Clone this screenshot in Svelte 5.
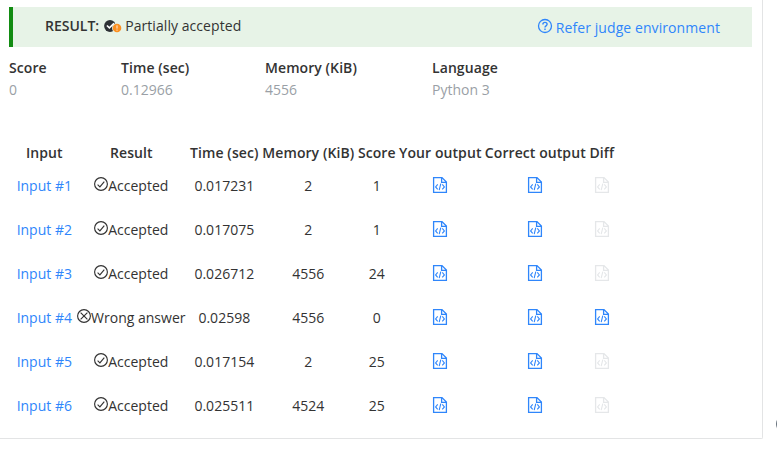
<script>
  const summary = [
    { label: 'Score', value: '0', width: 112 },
    { label: 'Time (sec)', value: '0.12966', width: 144 },
    { label: 'Memory (KiB)', value: '4556', width: 167 },
    { label: 'Language', value: 'Python 3', width: 120 }
  ];
  const headers = ['Input', 'Result', 'Time (sec)', 'Memory (KiB)', 'Score', 'Your output', 'Correct output', 'Diff'];
  const rows = [
    { ok: true, time: '0.017231', memory: 2, score: 1 },
    { ok: true, time: '0.017075', memory: 2, score: 1 },
    { ok: true, time: '0.026712', memory: 4556, score: 24 },
    { ok: false, time: '0.02598', memory: 4556, score: 0 },
    { ok: true, time: '0.017154', memory: 2, score: 25 },
    { ok: true, time: '0.025511', memory: 4524, score: 25 }
  ];
</script>

{#snippet file(active)}
  <svg class="file" class:active width="16" height="18" viewBox="0 0 16 18">
    <path d="M1.6 1.6H10L14.4 6V16.4H1.6Z M9.6 1.6V6.4H14.4" />
    <path class="thin" d="M5.7 8.4L3.6 10.9L5.7 13.4 M10.3 8.4L12.4 10.9L10.3 13.4 M8.8 7.6L7.2 14.2" />
  </svg>
{/snippet}

<div class="page">
  <main class="card">
    <div class="banner">
      <div class="result">
        <b>RESULT:</b>
        <svg class="partial" width="18" height="14" viewBox="0 0 18 14">
          <circle cx="6" cy="6" r="5.9" fill="#2d3135" />
          <path d="M2.9 5.5L5.4 7.9L10 3.4" fill="none" stroke="#fff" stroke-width="1.6" />
          <circle cx="13" cy="8" r="5" fill="#e8f3e8" />
          <circle cx="13" cy="8" r="4.3" fill="#fb9021" />
          <path d="M13 5.4V8.6M13 9.6V10.7" stroke="#fff" stroke-opacity=".85" stroke-width="1" />
        </svg>
        <span>Partially accepted</span>
      </div>
      <a href="#environment">
        <svg width="16" height="16" viewBox="0 0 16 16" fill="none" stroke="#2f86fb">
          <circle cx="8" cy="8" r="6.5" stroke-width="1.3" />
          <path d="M5.9 6.4C5.9 3.7 10.1 3.8 10.1 6.3C10.1 7.9 8 7.8 8 9.4M8 10.5V11.9" stroke-width="1.4" />
        </svg>
        <span>Refer judge environment</span>
      </a>
    </div>

    <dl>
      {#each summary as item}
        <div style:width="{item.width}px"><dt>{item.label}</dt><dd>{item.value}</dd></div>
      {/each}
    </dl>

    <div class="table">
      <div class="row head">
        {#each headers as header}<span>{header}</span>{/each}
      </div>
      {#each rows as row, i}
        <div class="row">
          <a href="#input-{i + 1}">Input #{i + 1}</a>
          <span class="status">
            <svg width="14" height="14" viewBox="0 0 14 14" fill="none" stroke="#333">
              <circle cx="7" cy="7" r="6.4" stroke-width="1.15" />
              {#if row.ok}
                <path d="M3.6 7.6L5.9 9.8L10.3 4.7" stroke-width="1.15" />
              {:else}
                <path d="M3.6 3.6L10.4 10.4M10.4 3.6L3.6 10.4" stroke-width="1.15" />
              {/if}
            </svg>{row.ok ? 'Accepted' : 'Wrong answer'}
          </span>
          <span>{row.time}</span>
          <span>{row.memory}</span>
          <span>{row.score}</span>
          <span>{@render file(true)}</span>
          <span>{@render file(true)}</span>
          <span>{@render file(!row.ok)}</span>
        </div>
      {/each}
    </div>
  </main>
  <i class="handle"></i>
</div>

<style>
  :global(body) { background: #fff; }
  .page {
    position: relative;
    width: 777px;
    height: 455px;
    overflow: hidden;
    font: 14px/20px 'Open Sans', sans-serif;
    color: #333;
  }
  .card {
    box-sizing: border-box;
    width: 763px;
    height: 439px;
    padding: 7px 10px 0 9px;
    border: solid #e3e4e5;
    border-width: 0 1px 1px 0;
    border-radius: 0 0 2px 0;
  }
  .banner {
    box-sizing: border-box;
    display: flex;
    justify-content: space-between;
    width: 743px;
    height: 40px;
    padding: 9px 32px 0 32px;
    border-left: 4px solid #128c12;
    background: #e7f3e7;
  }
  .result { display: flex; letter-spacing: 0.06px; }
  b, dt, .head { font-weight: 600; }
  b { letter-spacing: 0; }
  dt, .head { letter-spacing: 0.08px; }
  .partial { flex: none; margin: 4px 3.5px 0 4.5px; }
  a { color: #2f86fb; text-decoration: none; }
  .banner a { display: flex; gap: 3px; padding-top: 2px; letter-spacing: 0.08px; }
  dl { display: flex; margin: 11px 0 0; }
  dt { height: 22px; }
  dd { margin: 0; color: #9a9fa6; }
  .table { margin: 43px 0 0 4.8px; }
  .row {
    display: grid;
    grid-template-columns: 61px 113px 73px 95px 42px 85px 105px 28px;
    height: 44px;
    align-items: start;
    text-align: center;
    white-space: nowrap;
  }
  .head { height: 33px; }
  .status { display: flex; justify-content: center; }
  .status svg { margin-top: 1px; }
  .row span, .row a { min-width: 0; }
  .file { display: block; margin: 0 auto; fill: none; stroke: #e5e7e9; stroke-width: 1.3; }
  .active { stroke: #2f86fb; }
  .thin { stroke-width: 1.1; }
  .handle {
    position: absolute;
    left: 775.6px;
    top: 415px;
    width: 18px;
    height: 18px;
    border-radius: 9px;
    background: #68727d;
  }
</style>
